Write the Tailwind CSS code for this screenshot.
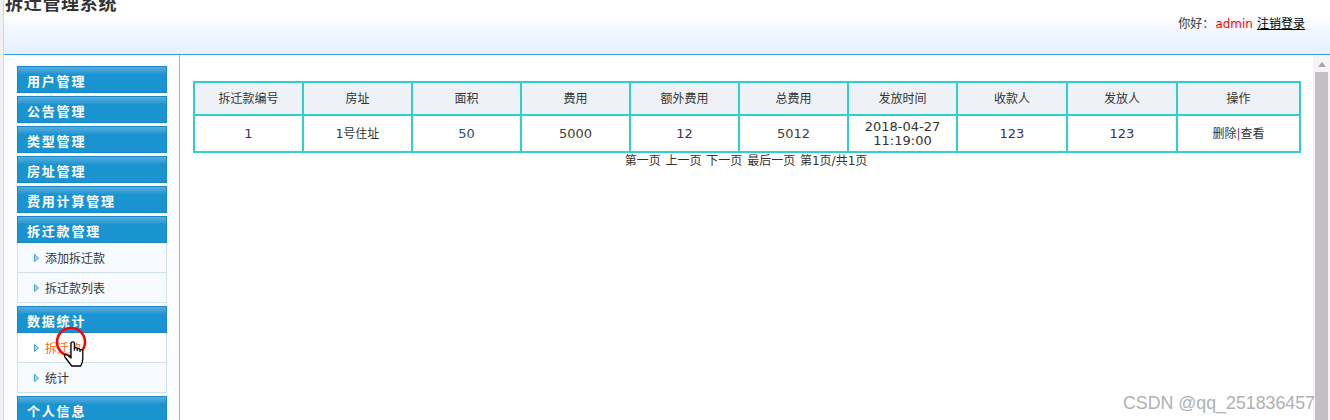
<!DOCTYPE html>
<html lang="zh">
<head>
  <meta charset="UTF-8" />
  <title>拆迁管理系统</title>
  <script src="https://cdn.jsdelivr.net/npm/@tailwindcss/browser@4"></script>
</head>
<body class="relative h-[420px] w-[1330px] overflow-hidden bg-white text-[12px] leading-none text-[#333] font-['DejaVu_Sans','Noto_Sans_CJK_SC',sans-serif]">

  <div class="flex h-[420px]">
    <!-- left edge of the window -->
    <div class="w-[4px] shrink-0 bg-[#f1f1f1] border-r border-[#d4d4d4]"></div>

    <div class="flex-1 flex flex-col min-w-0">
      <!-- header -->
      <div class="h-[18px] overflow-hidden bg-white pl-[1px]">
        <h1 class="-mt-[8px] text-[18px] leading-[24px] font-bold tracking-[0.7px] text-[#333]">拆迁管理系统</h1>
      </div>
      <div class="h-[37px] shrink-0 flex justify-end pr-[25px] border-b border-[#3b9ae0] bg-gradient-to-b from-[#fbfcff] to-[#e3f1fe]">
        <div class="h-[12px] flex items-center">
          <span>你好：</span>
          <span class="ml-[1px] text-[#ff0000]">admin</span>
          <a href="#" class="ml-[4px] text-black underline">注销登录</a>
        </div>
      </div>

      <div class="flex flex-1 min-h-0">
        <!-- sidebar -->
        <div class="w-[176px] shrink-0 bg-[#fafcff] border-r border-[#8fb9d9] pt-[11px] pl-[13px]">
          <div class="w-[150px] flex flex-col">
            <div class="h-[27px] mb-[3px] border border-[#1a86c4] bg-gradient-to-b from-[#55aedd] via-[#1a94d0] via-30% to-[#1a94d0] text-white font-bold text-[13px] tracking-[1.8px] pl-[9px] pt-[7px] font-['Noto_Sans_CJK_SC',sans-serif]">用户管理</div>
            <div class="h-[27px] mb-[3px] border border-[#1a86c4] bg-gradient-to-b from-[#55aedd] via-[#1a94d0] via-30% to-[#1a94d0] text-white font-bold text-[13px] tracking-[1.8px] pl-[9px] pt-[7px] font-['Noto_Sans_CJK_SC',sans-serif]">公告管理</div>
            <div class="h-[27px] mb-[3px] border border-[#1a86c4] bg-gradient-to-b from-[#55aedd] via-[#1a94d0] via-30% to-[#1a94d0] text-white font-bold text-[13px] tracking-[1.8px] pl-[9px] pt-[7px] font-['Noto_Sans_CJK_SC',sans-serif]">类型管理</div>
            <div class="h-[27px] mb-[3px] border border-[#1a86c4] bg-gradient-to-b from-[#55aedd] via-[#1a94d0] via-30% to-[#1a94d0] text-white font-bold text-[13px] tracking-[1.8px] pl-[9px] pt-[7px] font-['Noto_Sans_CJK_SC',sans-serif]">房址管理</div>
            <div class="h-[27px] mb-[3px] border border-[#1a86c4] bg-gradient-to-b from-[#55aedd] via-[#1a94d0] via-30% to-[#1a94d0] text-white font-bold text-[13px] tracking-[1.8px] pl-[9px] pt-[7px] font-['Noto_Sans_CJK_SC',sans-serif]">费用计算管理</div>

            <div class="h-[27px] border border-[#1a86c4] bg-gradient-to-b from-[#55aedd] via-[#1a94d0] via-30% to-[#1a94d0] text-white font-bold text-[13px] tracking-[1.8px] pl-[9px] pt-[7px] font-['Noto_Sans_CJK_SC',sans-serif]">拆迁款管理</div>
            <div class="mb-[3px] border-x border-b border-[#cfe0ea] bg-[#f7fbff]">
              <div class="h-[30px] flex items-center pl-[16px] pt-[2px] border-b border-[#cfe0ea]">
                <svg class="w-[5px] h-[8px] mr-[6px] mb-[2px]" viewBox="0 0 5 8"><path d="M.5.5 4.500 4 .5 7.500z" fill="#9fdcf8" stroke="#3fa2dc"/></svg>添加拆迁款
              </div>
              <div class="h-[29px] flex items-center pl-[16px] pt-[2px]">
                <svg class="w-[5px] h-[8px] mr-[6px] mb-[2px]" viewBox="0 0 5 8"><path d="M.5.5 4.500 4 .5 7.500z" fill="#9fdcf8" stroke="#3fa2dc"/></svg>拆迁款列表
              </div>
            </div>

            <div class="h-[27px] border border-[#1a86c4] bg-gradient-to-b from-[#55aedd] via-[#1a94d0] via-30% to-[#1a94d0] text-white font-bold text-[13px] tracking-[1.8px] pl-[9px] pt-[7px] font-['Noto_Sans_CJK_SC',sans-serif]">数据统计</div>
            <div class="mb-[3px] border-x border-b border-[#cfe0ea] bg-[#f7fbff]">
              <div class="h-[30px] flex items-center pl-[16px] pt-[2px] border-b border-[#cfe0ea] bg-white text-[#ff6600]">
                <svg class="w-[5px] h-[8px] mr-[6px] mb-[2px]" viewBox="0 0 5 8"><path d="M.5.5 4.500 4 .5 7.500z" fill="#9fdcf8" stroke="#3fa2dc"/></svg>拆迁款
              </div>
              <div class="h-[29px] flex items-center pl-[16px] pt-[2px]">
                <svg class="w-[5px] h-[8px] mr-[6px] mb-[2px]" viewBox="0 0 5 8"><path d="M.5.5 4.500 4 .5 7.500z" fill="#9fdcf8" stroke="#3fa2dc"/></svg>统计
              </div>
            </div>

            <div class="h-[27px] border border-[#1a86c4] bg-gradient-to-b from-[#55aedd] via-[#1a94d0] via-30% to-[#1a94d0] text-white font-bold text-[13px] tracking-[1.8px] pl-[9px] pt-[7px] font-['Noto_Sans_CJK_SC',sans-serif]">个人信息</div>
          </div>
        </div>

        <!-- main content -->
        <div class="flex-1 min-w-0 pl-[13px] pt-[26px]">
          <table class="w-[1108px] table-fixed border-collapse border-2 border-[#2dd0d0] text-center">
            <colgroup>
              <col class="w-[109px]" /><col class="w-[109px]" /><col class="w-[109px]" /><col class="w-[109px]" /><col class="w-[109px]" /><col class="w-[109px]" /><col class="w-[109px]" /><col class="w-[110px]" /><col class="w-[110px]" /><col />
            </colgroup>
            <tr class="h-[33px] bg-[#eef1f6]">
              <th class="border-2 border-[#2dd0d0] font-normal">拆迁款编号</th>
              <th class="border-2 border-[#2dd0d0] font-normal">房址</th>
              <th class="border-2 border-[#2dd0d0] font-normal">面积</th>
              <th class="border-2 border-[#2dd0d0] font-normal">费用</th>
              <th class="border-2 border-[#2dd0d0] font-normal">额外费用</th>
              <th class="border-2 border-[#2dd0d0] font-normal">总费用</th>
              <th class="border-2 border-[#2dd0d0] font-normal">发放时间</th>
              <th class="border-2 border-[#2dd0d0] font-normal">收款人</th>
              <th class="border-2 border-[#2dd0d0] font-normal">发放人</th>
              <th class="border-2 border-[#2dd0d0] font-normal">操作</th>
            </tr>
            <tr class="h-[37px] text-[13px]">
              <td class="border-2 border-[#2dd0d0] text-[#40305a]">1</td>
              <td class="border-2 border-[#2dd0d0] text-[12px]">1号住址</td>
              <td class="border-2 border-[#2dd0d0] text-[#2f4a7a]">50</td>
              <td class="border-2 border-[#2dd0d0] text-[#4a3a30]">5000</td>
              <td class="border-2 border-[#2dd0d0] text-[#40305a]">12</td>
              <td class="border-2 border-[#2dd0d0] text-[#4a3a30]">5012</td>
              <td class="border-2 border-[#2dd0d0] leading-[14px]">2018-04-27<br />11:19:00</td>
              <td class="border-2 border-[#2dd0d0] text-[#33306a]">123</td>
              <td class="border-2 border-[#2dd0d0] text-[#33306a]">123</td>
              <td class="border-2 border-[#2dd0d0] text-[12px]">删除<span class="text-[#8a2a8a]">|</span>查看</td>
            </tr>
          </table>
          <p class="w-[1106px] mt-[2px] text-center [word-spacing:1px]">第一页 上一页 下一页 最后一页 第1页/共1页</p>
        </div>

        <!-- scrollbar -->
        <div class="w-[17px] shrink-0 bg-[#f5f3f5] flex flex-col items-center pt-[7px]">
          <div class="w-0 h-0 border-x-[4px] border-x-transparent border-b-[5px] border-b-[#a8a5a8]"></div>
          <div class="mt-[5px] w-[13px] flex-1 bg-[#c3bfc3]"></div>
        </div>
      </div>
    </div>
  </div>

  <!-- click marker and cursor from the recording -->
  <svg class="absolute left-[55px] top-[325px] w-[32px] h-[44px]" viewBox="0 0 32 44">
    <circle cx="16" cy="17" r="14" fill="none" stroke="#f00" stroke-width="2.500" />
    <path d="M16 28V18.500a1.700 1.700 0 0 1 3.400 0V25v-1.500a1.600 1.600 0 0 1 2.800 0V25.500v-1a1.500 1.500 0 0 1 2.800 0V26.500v-.5a1.400 1.400 0 0 1 2.800 0V34c0 3-1 5-2 7h-9c-2-2.500-5-6.500-7-9-1-1.500 1-3 2.500-2l3.700 3z" fill="#fff" stroke="#000" stroke-width="1.300" stroke-linejoin="round" />
  </svg>

  <div class="absolute right-[15px] top-[394px] text-[17.8px] leading-[18px] text-[#b0b0b0] font-['Liberation_Sans',sans-serif]">CSDN @qq_251836457</div>
</body>
</html>
